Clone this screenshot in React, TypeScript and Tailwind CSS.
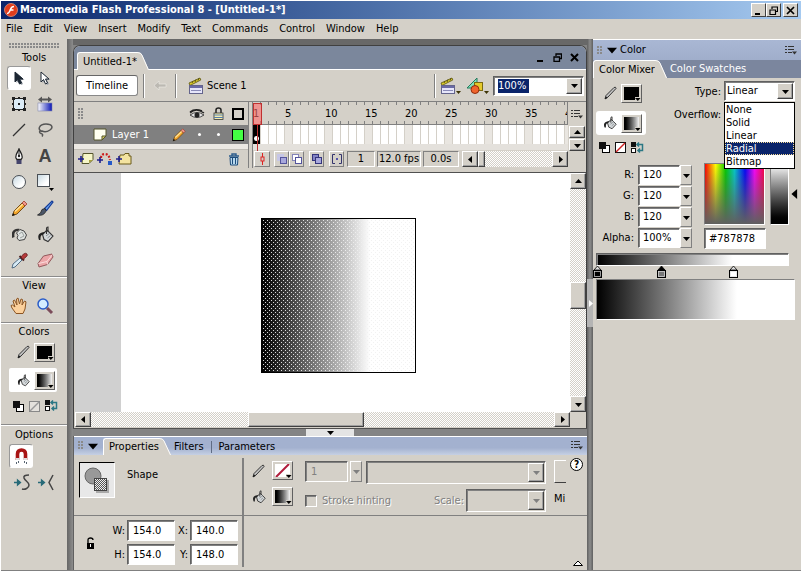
import type { ReactNode } from "react";

const raised =
  "flex items-center justify-center bg-[#d4d0c8] border border-t-white border-l-white border-r-[#404040] border-b-[#404040] shadow-[inset_-1px_-1px_0_#a0a0a0]";
const soft =
  "flex items-center justify-center bg-[#d4d0c8] border border-t-white border-l-white border-r-[#808080] border-b-[#808080]";
const sunken =
  "border border-t-[#606060] border-l-[#606060] border-r-white border-b-white shadow-[inset_1px_1px_0_#808080]";
const thin = "border border-t-[#808080] border-l-[#808080] border-r-white border-b-white";
const checker =
  "bg-[repeating-conic-gradient(#ffffff_0_25%,#d4d0c8_0_50%)] bg-[length:2px_2px]";
const grip =
  "bg-[radial-gradient(circle_at_1px_1px,#8a8a8a_1px,transparent_1px)] bg-[length:3px_3px]";
const fillRamp = "bg-[linear-gradient(90deg,#000000,#787878_34%,#ffffff_71%)]";

function Svg({ w, h, children, className = "" }: { w: number; h: number; children: ReactNode; className?: string }) {
  return (
    <svg width={w} height={h} viewBox={`0 0 ${w} ${h}`} className={`shrink-0 ${className}`} aria-hidden="true">
      {children}
    </svg>
  );
}

function Arrow({ dir, color = "#000", big = false }: { dir: "up" | "down" | "left" | "right"; color?: string; big?: boolean }) {
  const d = { down: "M0 2h7l-3.5 4z", up: "M0 5h7l-3.5 -4z", left: "M5 0v7l-4 -3.5z", right: "M2 0v7l4 -3.5z" }[dir];
  return (
    <svg width={big ? 10 : 7} height={big ? 10 : 7} viewBox="0 0 7 7" className="shrink-0" aria-hidden="true">
      <path d={d} fill={color} />
    </svg>
  );
}

/* ---------- icons ---------- */
const Pointer = ({ dark }: { dark: boolean }) => (
  <Svg w={12} h={15}>
    <path d="M2 1v10l2.500-2.500 2 4.500 2-1-2-4h3.500z" transform="translate(1.500 1)" fill="#9aa0a8" />
    <path d="M2 1v10l2.500-2.500 2 4.500 2-1-2-4h3.500z" fill={dark ? "#1c2733" : "#fff"} stroke="#1c2733" strokeWidth="1" />
  </Svg>
);
const Transform = () => (
  <Svg w={16} h={16}>
    <rect x="2.500" y="2.500" width="11" height="11" fill="#dcecf6" stroke="#222" />
    <path d="M1 1h3v3h-3zM12 1h3v3h-3zM1 12h3v3h-3zM12 12h3v3h-3zM7 7h2v2h-2zM7 1h2v2h-2zM7 13h2v2h-2zM1 7h2v2h-2zM13 7h2v2h-2z" fill="#222" />
  </Svg>
);
const FillTransform = () => (
  <Svg w={16} h={16}>
    <defs>
      <linearGradient id="ft"><stop stopColor="#fff" /><stop offset="1" stopColor="#0a14b4" /></linearGradient>
    </defs>
    <path d="M1 3.500l4-3v2h6v-2l4 3-4 3v-2H5v2z" fill="#555" />
    <rect x="1" y="7" width="14" height="8" fill="url(#ft)" stroke="#8088b0" strokeWidth=".6" />
  </Svg>
);
const Line = () => <Svg w={16} h={16}><path d="M2 14L14 2" stroke="#333" strokeWidth="1.300" /></Svg>;
const Lasso = () => (
  <Svg w={16} h={16}>
    <path d="M5 9.500C0 8 2 2 9 2c7 0 7 4 4 6s-6 2-8 1c-3-1-3 2-1 2.500s2 1.500 1 3" fill="none" stroke="#555" strokeWidth="1.500" />
  </Svg>
);
const Pen = () => (
  <Svg w={12} h={17}>
    <path d="M6 1C5 4 2 6.500 3 10l1 1.500h4L9 10c1-3.500-2-6-3-9z" fill="#fff" stroke="#222" strokeWidth="1.300" />
    <path d="M6 2v6" stroke="#222" /><circle cx="6" cy="8" r="1.200" fill="#222" />
    <rect x="3.500" y="12" width="5" height="4" fill="#44446c" />
  </Svg>
);
const Oval = () => (
  <Svg w={16} h={16}>
    <defs><linearGradient id="ov" x2="1" y2="1"><stop stopColor="#c4d6e0" /><stop offset=".7" stopColor="#fff" /></linearGradient></defs>
    <circle cx="8" cy="8" r="6.500" fill="url(#ov)" stroke="#4a4f55" />
  </Svg>
);
const Rect = () => (
  <Svg w={18} h={18}>
    <rect x="1.500" y="1.500" width="12" height="12" fill="url(#ov)" stroke="#4a4f55" />
    <path d="M13 15h5l-2.500 3z" fill="#000" />
  </Svg>
);
const Pencil = ({ s = 17 }: { s?: number }) => (
  <svg width={s} height={s} viewBox="0 0 17 17" aria-hidden="true">
    <path d="M1.500 15.500l1.500-4.500L11 3l3 3-8 8z" fill="#f3a52a" stroke="#6a4210" strokeWidth=".9" />
    <path d="M4 11.500l8-7.500" stroke="#ffe49a" strokeWidth="1.400" />
    <path d="M11 3l2-2 3 3-2 2z" fill="#f0988a" stroke="#9a3a2a" strokeWidth=".8" />
    <path d="M1 16l1-3 2 2z" fill="#111" />
  </svg>
);
const Brush = () => (
  <Svg w={17} h={17}>
    <path d="M7.500 8.500L15 1l1 1-6.500 8.500z" fill="#6ba6f0" stroke="#163c98" strokeWidth="1.200" />
    <path d="M8 8.500l-3 1-1.500 3.500-3 2c4 1 7.500-.5 8.500-4.500z" fill="#4b5668" stroke="#222" strokeWidth=".8" />
  </Svg>
);
const Ink = () => (
  <Svg w={17} h={15}>
    <path d="M1 11V5.500C2 2 6 1 9 2L7 4C4 4 3 6 3.500 10z" fill="#333" />
    <path d="M5.500 6L9 2.500l4 1.500 2.500 4-2 4.500-5.500 1-2-2.500 1-2.500z" fill="#e0e4e2" stroke="#444" />
    <path d="M8 7l3-2 2 4-4 2" fill="none" stroke="#9aa09e" />
  </Svg>
);
const Bucket = ({ s = 17 }: { s?: number }) => (
  <svg width={s} height={s} viewBox="0 0 17 17" className="shrink-0" aria-hidden="true">
    <path d="M5.500 8.500L10 4l6 6-5 5.500-4-2z" fill="#d4d8da" stroke="#333" strokeWidth="1.100" />
    <path d="M9 10l4-3M10.500 12l3-2.500" stroke="#8a9094" />
    <path d="M9.500 8V2.500q0-1.500 1.500-1.500V6" fill="none" stroke="#333" strokeWidth="1.100" />
    <path d="M2 14C0 9 2 6.500 8 6L6 8.500C3.500 9 3.500 11 3.500 14z" fill="#222" />
  </svg>
);
const Dropper = () => (
  <Svg w={17} h={17}>
    <path d="M1 16l1-4 7-6 2 2-7 7z" fill="#d6eaf5" stroke="#46617a" strokeWidth=".9" />
    <path d="M8.500 4l4.500 4.500" stroke="#4a2020" strokeWidth="2" />
    <path d="M10 5l2.500-3Q15 .5 16 2t-1 3l-3 2.500z" fill="#b63a3a" stroke="#622" strokeWidth=".8" />
  </Svg>
);
const Eraser = () => (
  <Svg w={17} h={15}>
    <path d="M1 10.500L6.500 3 15 1l1 3-5.500 7.500L2 14z" fill="#eba6a8" stroke="#8a4f52" strokeWidth=".9" />
    <path d="M1.500 10.500L10 8.500l5.500-7M10 8.500l.5 3" fill="none" stroke="#fbdcdc" />
  </Svg>
);
const Hand = () => (
  <Svg w={18} h={18}>
    <path d="M6 16.500L2 11 1 8.500l1.500-.5L5 10 3 4l1.500-1L7 8 6.500 2 8 1l1.500 6L11 2l1.500.5L12 8l2.500-4 1.500.8L15 12l-2 4.500z" fill="#fbd09c" stroke="#8b5524" />
  </Svg>
);
const Magnifier = () => (
  <Svg w={18} h={18}>
    <path d="M11 11l5 5" stroke="#7b4c5a" strokeWidth="3" />
    <circle cx="7" cy="7" r="5" fill="#d4ecff" stroke="#2a5cc8" strokeWidth="1.500" />
  </Svg>
);
const StrokePen = () => (
  <Svg w={13} h={14}>
    <path d="M1 13l1-3.500L10 1.500q2-1 2 1L4 11z" fill="#c4c4c4" stroke="#333" strokeWidth="1" />
    <path d="M1 13l1-2.500 1.500 1.500z" fill="#111" />
  </Svg>
);
const BlackWhite = () => (
  <Svg w={11} h={11}><rect x="3.500" y="3.500" width="7" height="7" fill="#fff" stroke="#000" /><rect width="7" height="7" fill="#111" /></Svg>
);
const NoColor = ({ c }: { c: string }) => (
  <Svg w={11} h={11}><rect x=".5" y=".5" width="10" height="10" fill={c === "#999" ? "#e4e1dc" : "#fff"} stroke={c === "#999" ? "#888" : "#111"} /><path d="M1 10L10 1" stroke={c} strokeWidth="1.500" /></Svg>
);
const Swap = () => (
  <Svg w={13} h={12}>
    <rect width="5" height="5" fill="#111" /><rect x=".5" y="6.500" width="4" height="4" fill="#fff" stroke="#111" />
    <path d="M6 2.500h5.500v6H7M8 .5L6 2.500l2 2M9 6.500l-2 2 2 2" fill="none" stroke="#2b7784" strokeWidth="1.500" />
  </Svg>
);
const Magnet = () => (
  <Svg w={13} h={17}>
    <path d="M2.500 12V6q0-4 4-4t4 4v6" fill="none" stroke="#a81414" strokeWidth="3.600" />
    <path d="M1 11h3.500M8.500 11H12" stroke="#ddd" strokeWidth="2" />
    <path d="M1 15h1M3 14h1M9 14h1M11 15h1" stroke="#234" strokeWidth="1.400" />
  </Svg>
);
const Smooth = ({ straight }: { straight?: boolean }) => (
  <Svg w={18} h={17}>
    <path d="M1 8.500h5M4.500 6l3 2.500-3 2.500z" fill="#276a78" stroke="#276a78" strokeWidth="1.300" />
    <path d={straight ? "M16 1l-4 7.500 4 7.500" : "M16 1q-6 0-5 3c1 3 5 4 5 7s-4 5-7 4"} fill="none" stroke="#444" strokeWidth="1.500" />
  </Svg>
);
const Clapper = ({ more }: { more?: boolean }) => (
  <Svg w={more ? 21 : 16} h={18}>
    <path d="M1 6L12 1l.8 2L2 8.500z" fill="#d7c92c" stroke="#5c5412" strokeWidth=".8" />
    <path d="M4 6l1-2M7 5l1-2.500M10 3.500l1-2.500" stroke="#5c5412" />
    <rect x="1.500" y="8.500" width="13" height="8" fill="#e6e6fa" stroke="#64648c" />
    <path d="M2 10h12" stroke="#6a6aa6" strokeWidth="2" /><path d="M3 13.500h10" stroke="#8a8ab8" />
    {more && <path d="M16 14h5l-2.500 3z" fill="#3d3406" />}
  </Svg>
);
const Symbols = () => (
  <Svg w={23} h={18}>
    <path d="M1 11L11 1v10z" fill="#7fe0ba" stroke="#257a5c" />
    <rect x="8.500" y="5.500" width="8" height="8" fill="#e4c92c" stroke="#7a6a10" />
    <circle cx="9" cy="12.500" r="4" fill="#f0642c" stroke="#8f2c0c" />
    <path d="M18 14h5l-2.500 3z" fill="#3d3406" />
  </Svg>
);
const PanelMenu = () => (
  <Svg w={12} h={10}>
    <path d="M0 1.500h2M0 4.500h2M0 7.500h2M3 1.500h6M3 4.500h6M3 7.500h4" stroke="#333" />
    <path d="M7 6.500h5l-2.500 3z" fill="#333" />
  </Svg>
);
const Eye = () => (
  <Svg w={16} h={12}>
    <path d="M1 5q6-6 14 0M1 4q5-4 12-1" fill="none" stroke="#222" strokeWidth="1.400" />
    <path d="M1 7q7 5 14 0-7-5-14 0z" fill="#e8e8e8" stroke="#444" /><circle cx="8" cy="7" r="2.500" fill="#222" />
  </Svg>
);
const Lock = () => (
  <Svg w={11} h={13}>
    <path d="M3 6V3q0-2 2.500-2T8 3v3" fill="none" stroke="#222" strokeWidth="1.500" />
    <rect x="1" y="6" width="9" height="6.500" fill="#f4ecb0" stroke="#333" strokeWidth=".8" /><path d="M1 8h9M1 10.500h9" stroke="#5580b0" />
  </Svg>
);
const Sheet = () => (
  <Svg w={14} h={13}><path d="M1 1h12v7l-4 4H1z" fill="#fffff0" stroke="#55552c" /><path d="M9 12V8h4z" fill="#d8cf60" stroke="#55552c" /></Svg>
);
const AddSheet = () => (
  <Svg w={16} h={14}><path d="M5 1.500h10v6l-4 4H4z" fill="#f6f6c8" stroke="#55552c" /><path d="M11 11V8h4z" fill="#a8a040" /><path d="M0 7h6M3 4v6" stroke="#20208c" strokeWidth="1.600" /></Svg>
);
const AddGuide = () => (
  <Svg w={16} h={14}><path d="M4 6q0-4 4-4t5 6" fill="none" stroke="#cc1c1c" strokeWidth="2.200" strokeDasharray="2 1.500" /><path d="M0 8h6M3 5v6" stroke="#20208c" strokeWidth="1.600" /><rect x="11" y="9" width="4" height="4" fill="#2458c8" /></Svg>
);
const AddFolder = () => (
  <Svg w={16} h={14}><path d="M4 3h4l1-1.500h4V4h2v8H3z" fill="#f3e3a0" stroke="#6b5a1a" /><path d="M0 7h6M3 4v6" stroke="#20208c" strokeWidth="1.600" /></Svg>
);
const Trash = () => (
  <Svg w={12} h={13}><path d="M1 3h10M4 3V1h4v2" stroke="#2c5c8c" fill="none" strokeWidth="1.400" /><path d="M2 4.500h8L9.500 12h-7z" fill="#b8d8ee" stroke="#1c4c7c" /><path d="M4.500 5v6M7.500 5v6" stroke="#1c4c7c" /></Svg>
);

/* ---------- controls ---------- */
function Swatch({ label, children }: { label: string; children: ReactNode }) {
  return (
    <button aria-label={label} className="relative flex h-[19px] w-[21px] items-center justify-center border border-t-white border-l-white border-r-[#606060] border-b-[#606060] bg-[#d4d0c8] p-[2px]">
      {children}
      <span className="absolute right-0 bottom-0"><Svg w={6} h={5}><rect width="6" height="5" fill="#d4d0c8" /><path d="M0 1h5.500l-2.700 3z" /></Svg></span>
    </button>
  );
}
const Black = () => <span className="h-full w-full bg-black" />;
const Ramp = () => <span className="h-full w-full bg-linear-to-r from-black to-[#f4f4f4]" />;
const NoStroke = () => (
  <span className="h-full w-full bg-white"><Svg w={15} h={13}><path d="M1 13L14 0" stroke="#b01c3c" strokeWidth="2" /></Svg></span>
);

function Tool({ name, on, children }: { name: string; on?: boolean; children: ReactNode }) {
  return (
    <button aria-label={name} className={`flex size-6 items-center justify-center rounded-[3px] ${on ? "border border-t-[#999] border-l-[#999] border-r-white border-b-white bg-white" : ""}`}>
      {children}
    </button>
  );
}

function Toolbar() {
  const rule = "border-t border-[#8b8b8b] shadow-[inset_0_1px_0_#ffffff]";
  return (
    <aside className="flex w-[66px] shrink-0 flex-col bg-[#d4d0c8]">
      <div className={`mx-2 mt-1 h-[5px] ${grip}`} />
      <section className="px-[6px] pb-1">
        <h2 className="pt-[2px] text-center leading-[16px]">Tools</h2>
        <div className="grid grid-cols-[24px_24px] gap-x-[2px] gap-y-[2px]">
          <Tool name="Selection" on><Pointer dark /></Tool>
          <Tool name="Subselection"><Pointer dark={false} /></Tool>
          <Tool name="Free transform"><Transform /></Tool>
          <Tool name="Fill transform"><FillTransform /></Tool>
          <Tool name="Line"><Line /></Tool>
          <Tool name="Lasso"><Lasso /></Tool>
          <Tool name="Pen"><Pen /></Tool>
          <Tool name="Text tool"><span className="font-['Liberation_Sans',sans-serif] text-[18px] font-bold text-[#444]">A</span></Tool>
          <Tool name="Oval"><Oval /></Tool>
          <Tool name="Rectangle"><Rect /></Tool>
          <Tool name="Pencil"><Pencil /></Tool>
          <Tool name="Brush"><Brush /></Tool>
          <Tool name="Ink bottle"><Ink /></Tool>
          <Tool name="Paint bucket"><Bucket /></Tool>
          <Tool name="Eyedropper"><Dropper /></Tool>
          <Tool name="Eraser"><Eraser /></Tool>
        </div>
      </section>
      <section className={`px-[6px] pb-1 ${rule}`}>
        <h2 className="pt-[1px] text-center leading-[16px]">View</h2>
        <div className="grid grid-cols-[24px_24px] gap-x-[2px]">
          <Tool name="Hand"><Hand /></Tool>
          <Tool name="Zoom"><Magnifier /></Tool>
        </div>
      </section>
      <section className={`px-2 pb-3 ${rule}`}>
        <h2 className="pt-[1px] text-center leading-[16px]">Colors</h2>
        <div className="flex h-6 items-center gap-1 pl-2"><StrokePen /><Swatch label="Stroke color"><Black /></Swatch></div>
        <div className="mt-1 flex h-6 w-12 items-center gap-1 rounded-[2px] bg-white pl-2"><Bucket s={13} /><Swatch label="Fill color"><Ramp /></Swatch></div>
        <div className="mt-2 flex items-center gap-[5px] pl-1"><BlackWhite /><NoColor c="#999" /><Swap /></div>
      </section>
      <section className={`px-2 ${rule}`}>
        <h2 className="pt-[1px] text-center leading-[18px]">Options</h2>
        <Tool name="Snap to objects" on><Magnet /></Tool>
        <div className="mt-[6px] flex gap-[6px] pl-1"><Smooth /><Smooth straight /></div>
      </section>
    </aside>
  );
}

function TabCorner({ h, fill = "#d4d0c8" }: { h: number; fill?: string }) {
  return (
    <svg width="12" height={h} viewBox="0 0 12 20" preserveAspectRatio="none" className="shrink-0" aria-hidden="true">
      <path d="M0 0q4 0 5 3l7 17H0z" fill={fill} /><path d="M0 .5q4 0 5 3l6.500 16.500" fill="none" stroke="#fff" />
    </svg>
  );
}

const frames = Array.from({ length: 42 }, (_, i) => i + 1);

function Timeline() {
  return (
    <div className="flex border-t border-[#808080]">
      <div className="flex w-[175px] shrink-0 flex-col border-r border-[#808080]">
        <div className="flex h-[23px] items-center pr-1">
          <span className={`ml-1 h-[12px] w-[6px] ${grip}`} />
          <span className="ml-auto flex items-center gap-2"><Eye /><Lock /><span className="size-3 border-2 border-black" /></span>
        </div>
        <div className="flex h-[19px] items-center bg-[#808080] pr-1 text-white">
          <span className="ml-[19px]"><Sheet /></span>
          <span className="ml-[5px]">Layer 1</span>
          <span className="ml-auto flex items-center"><Pencil s={14} /><span className="ml-3 size-[3px] rounded-full bg-white" /><span className="ml-4 size-[3px] rounded-full bg-white" /><span className="ml-3 size-3 border border-black bg-[#4f4]" /></span>
        </div>
        <div className="h-[6px] border-b border-[#c0bdb6] bg-[#ebe8e3]" />
        <div className="flex h-[18px] items-center gap-[3px] pr-2 pl-1"><AddSheet /><AddGuide /><AddFolder /><span className="ml-auto"><Trash /></span></div>
      </div>
      <div className="relative ml-[3px] min-w-0 flex-1 overflow-hidden border-l border-[#808080]">
        <div className="flex h-[23px] overflow-hidden border-r border-b border-[#808080]">
          {frames.map((f) => (
            <div key={f} className="flex w-2 shrink-0 flex-col justify-between">
              <span className="ml-auto h-[3px] w-px bg-[#808080]" />
              <span className="h-[13px] leading-[13px] whitespace-nowrap">{f === 1 || f % 5 === 0 ? f : ""}</span>
              <span className="ml-auto h-[3px] w-px bg-[#808080]" />
            </div>
          ))}
        </div>
        <div className="flex h-[19px] overflow-hidden bg-white">
          {frames.map((f) => (
            <div key={f} className={`w-2 shrink-0 border-r border-[#d4d0c8] ${f === 1 ? "flex items-end justify-center bg-black pb-[3px]" : f % 5 === 0 ? "bg-[#e9e6e1]" : "bg-white"}`}>
              {f === 1 && <span className="size-[5px] rounded-full bg-white" />}
            </div>
          ))}
        </div>
        <div className="h-[6px] bg-[#e4e1dc]" />
        <div className="flex h-[18px] items-center">
          <button aria-label="Center frame" className={`${soft} ml-px h-4 w-4`}><Svg w={5} h={12}><path d="M2.500 0v12" stroke="#d22" /><rect x="1" y="4" width="3" height="4" fill="#d4d0c8" stroke="#d22" /></Svg></button>
          <button aria-label="Onion skin" className={`${soft} ml-1 h-4 w-[15px]`}><Svg w={10} h={10}><rect width="7" height="7" fill="#c6c6e6" /><rect x="3.500" y="3.500" width="6" height="6" fill="#a8a8dc" stroke="#54549c" /></Svg></button>
          <button aria-label="Onion skin outlines" className={`${soft} h-4 w-[15px]`}><Svg w={10} h={10}><rect x=".5" y=".5" width="6" height="6" fill="#fff" stroke="#8484b8" /><rect x="3.500" y="3.500" width="6" height="6" fill="#fff" stroke="#54549c" /></Svg></button>
          <button aria-label="Edit multiple frames" className={`${soft} ml-[5px] h-4 w-[15px]`}><Svg w={10} h={10}><rect x=".5" y=".5" width="6" height="6" fill="#8484c4" stroke="#34347c" /><rect x="3.500" y="3.500" width="6" height="6" fill="#a8a8dc" stroke="#34347c" /></Svg></button>
          <button aria-label="Modify onion markers" className={`${soft} ml-[5px] h-4 w-[15px]`}><Svg w={10} h={10}><path d="M3 .5H.5v9H3M7 .5h2.500v9H7" fill="none" stroke="#34346c" /><rect x="4" y="4" width="2" height="2" fill="#55a" /></Svg></button>
          <span className={`${thin} ml-[3px] h-4 w-7 text-center leading-[14px]`}>1</span>
          <span className={`${thin} ml-[2px] flex h-4 w-11 justify-center leading-[14px] whitespace-nowrap`}>12.0 fps</span>
          <span className={`${thin} ml-[2px] h-4 w-9 text-center leading-[14px]`}>0.0s</span>
          <div className={`ml-[3px] flex h-4 min-w-0 flex-1 ${checker}`}>
            <button aria-label="Scroll left" className={`${raised} w-4`}><Arrow dir="left" /></button>
            <span className={`${raised} w-[7px]`} />
            <button aria-label="Scroll right" className={`${raised} ml-auto w-4`}><Arrow dir="right" /></button>
          </div>
        </div>
        <div className="absolute top-px left-0 h-[22px] w-[9px] border border-[#c03030] bg-[#ff6a6a]/60" />
        <div className="absolute top-[23px] left-1 h-[26px] w-px bg-[#c03030]" />
      </div>
      <div className="flex w-[18px] shrink-0 flex-col items-center">
        <button aria-label="Frame view" className="flex h-[23px] items-center"><PanelMenu /></button>
        <button aria-label="Scroll up" className={`${raised} mt-px h-3 w-4`}><Arrow dir="up" /></button>
        <button aria-label="Scroll down" className={`${raised} mt-px h-3 w-4`}><Arrow dir="down" /></button>
      </div>
    </div>
  );
}

/* A selected fill is covered with staggered light dots, fading out as the ramp reaches white. */
function SelectedShape() {
  return (
    <div className={`absolute top-[45px] left-[140px] size-[155px] border border-black ${fillRamp}`}>
      <svg className="h-full w-full" shapeRendering="crispEdges" aria-hidden="true">
        <defs>
          <pattern id="sel" width="4" height="4" patternUnits="userSpaceOnUse">
            <path d="M1 1h1v1H1zM3 3h1v1H3z" fill="#f0f0f0" />
          </pattern>
        </defs>
        <rect width="100%" height="100%" fill="url(#sel)" className="opacity-90" />
      </svg>
    </div>
  );
}

function DocumentWindow() {
  const bar = "mx-[5px] h-6 w-px bg-[#808080] shadow-[1px_0_0_#ffffff]";
  return (
    <section className="flex min-h-0 flex-1 flex-col overflow-hidden rounded-t-[7px] border border-b-0 border-[#404040] bg-[#d4d0c8]">
      <div className="flex h-6 shrink-0 items-end border-b border-white bg-[#7b879c] pl-[3px]">
        <div className="-mb-px flex h-[18px]">
          <span className="rounded-tl-[3px] border-t border-l border-white bg-[#d4d0c8] pl-[5px] leading-[17px]">Untitled-1*</span>
          <TabCorner h={18} />
        </div>
        <div className="ml-auto flex h-full items-center gap-2 pr-[7px]">
          <button aria-label="Minimize document"><Svg w={9} h={9}><path d="M1 8h6" stroke="#000" strokeWidth="2" /></Svg></button>
          <button aria-label="Restore document"><Svg w={9} h={9}><path d="M3 3V1h5.500v4.500H7M1 4h5.500v4.500H1z" fill="none" stroke="#000" strokeWidth="1.300" /></Svg></button>
          <button aria-label="Close document"><Svg w={9} h={9}><path d="M1 1l7 7M8 1L1 8" stroke="#000" strokeWidth="2" /></Svg></button>
        </div>
      </div>
      <div className="flex h-[31px] shrink-0 items-center pl-[2px]">
        <button className="h-[21px] w-[62px] rounded-[3px] border border-t-[#666] border-l-[#666] border-r-[#888] border-b-[#888] bg-white">Timeline</button>
        <span className={bar} />
        <button aria-label="Back" className="ml-1"><Svg w={14} h={11}><path d="M1 5.500L6 1v3h7v3H6v3z" fill="#bcb9b2" stroke="#eeece8" strokeWidth=".6" /></Svg></button>
        <span className={`${bar} ml-2`} />
        <span className="ml-[7px]"><Clapper /></span>
        <span className="ml-[3px]">Scene 1</span>
        <span className={`${bar} ml-auto`} />
        <button aria-label="Edit scene"><Clapper more /></button>
        <button aria-label="Edit symbols" className="ml-[5px]"><Symbols /></button>
        <div className={`${sunken} mr-[2px] ml-1 flex h-5 w-[91px] bg-white p-px`}>
          <label htmlFor="zoom" className="sr-only">Zoom</label>
          <div className="flex min-w-0 flex-1 items-center pl-[3px]">
            <input id="zoom" defaultValue="100%" className="h-[14px] w-[31px] bg-[#0a246a] text-white outline-none" />
          </div>
          <button aria-label="Zoom presets" className={`${raised} w-4`}><Arrow dir="down" /></button>
        </div>
      </div>
      <Timeline />
      <div className="mt-[4px] flex h-[240px] border-t border-[#505050] pl-px">
        <div className="flex min-w-0 flex-1 bg-white">
          <div className="w-[46px] shrink-0 bg-[#d0d0d0]" />
          <div className="relative min-w-0 flex-1 overflow-hidden">
            <SelectedShape />
          </div>
        </div>
        <div className={`flex w-4 flex-col ${checker}`}>
          <button aria-label="Scroll up" className={`${raised} h-4`}><Arrow dir="up" /></button>
          <span className="flex-1" />
          <span className={`${raised} h-[27px]`} />
          <span className="h-[87px]" />
          <button aria-label="Scroll down" className={`${raised} h-4`}><Arrow dir="down" /></button>
        </div>
      </div>
      <div className="flex h-[15px] shrink-0 pl-px">
        <div className={`flex flex-1 ${checker}`}>
          <button aria-label="Scroll left" className={`${raised} w-4`}><Arrow dir="left" /></button>
          <span className="w-[157px]" />
          <span className={`${raised} w-[116px]`} />
          <button aria-label="Scroll right" className={`${raised} ml-auto w-4`}><Arrow dir="right" /></button>
        </div>
        <span className="w-4" />
      </div>
    </section>
  );
}

function Field({ id, label, value, w }: { id: string; label: string; value: string; w: string }) {
  return (
    <>
      <label htmlFor={id} className="text-right">{label}</label>
      <input id={id} defaultValue={value} className={`${sunken} h-[21px] ${w} bg-white pl-[5px] outline-none`} />
    </>
  );
}

function Properties() {
  const dim = "text-[#808080] [text-shadow:1px_1px_0_#ffffff]";
  return (
    <section className="border-l border-[#606060] bg-[#d4d0c8]">
      <div className="flex h-[19px] items-end border-t border-white bg-linear-to-b from-[#a3b1cf] from-60% to-[#c6d0e4] pl-1">
        <span className={`mb-[5px] h-[9px] w-[6px] ${grip}`} />
        <button aria-label="Collapse properties" className="mb-1 ml-1"><Arrow dir="down" big /></button>
        <div className="ml-[5px] flex h-[17px]">
          <button className="rounded-tl-[3px] border-t border-l border-white bg-[#d4d0c8] pl-[5px] leading-[16px]">Properties</button>
          <TabCorner h={17} />
        </div>
        <button className="ml-[3px] h-[17px] leading-[17px]">Filters</button>
        <span className="mx-[7px] mb-[2px] h-3 w-px bg-[#606c84]" />
        <button className="h-[17px] leading-[17px]">Parameters</button>
        <button aria-label="Properties menu" className="mr-1 mb-[5px] ml-auto"><PanelMenu /></button>
      </div>
      <div className="flex h-[115px]">
        <div className="my-[3px] flex w-[170px] shrink-0 flex-col border-r-2 border-[#808080]">
          <div className="flex h-[57px] items-start pt-[4px] pl-[5px]">
            <div className="flex size-9 items-center justify-center border border-t-black border-l-black border-r-white border-b-white bg-[#e8e8e8]">
              <Svg w={26} h={26}>
                <defs><pattern id="dots" width="2" height="2" patternUnits="userSpaceOnUse"><rect width="2" height="2" fill="#eee" /><path d="M0 0h1v1H0zM1 1h1v1H1z" fill="#555" /></pattern></defs>
                <circle cx="9" cy="9" r="8" fill="#999" stroke="#666" /><rect x="12" y="13" width="13" height="13" fill="#aaa" /><rect x="10.500" y="11.500" width="12" height="12" fill="url(#dots)" stroke="#444" />
              </Svg>
            </div>
            <span className="mt-[6px] ml-3">Shape</span>
          </div>
          <div className="flex flex-1 items-center border-t border-[#808080] pt-[2px] pl-3">
            <Svg w={9} h={12}><path d="M2 6V3q0-2 2.500-2T7 3" fill="none" stroke="#000" strokeWidth="1.300" /><rect x="1" y="6" width="7" height="6" /><path d="M4.500 7v3" stroke="#fff" /></Svg>
            <div className="ml-auto grid grid-cols-[14px_48px_11px_48px] items-center gap-x-[2px] gap-y-[3px] pr-1">
              <Field id="pw" label="W:" value="154.0" w="w-[48px]" />
              <Field id="px" label="X:" value="140.0" w="w-[48px]" />
              <Field id="ph" label="H:" value="154.0" w="w-[48px]" />
              <Field id="py" label="Y:" value="148.0" w="w-[48px]" />
            </div>
          </div>
        </div>
        <div className="my-[3px] flex min-w-0 flex-1 flex-col">
          <div className="flex h-[57px] pl-2">
            <div className="grid grid-cols-[16px_21px] content-start items-center gap-x-1 gap-y-[7px] pt-[3px]">
              <StrokePen /><Swatch label="Stroke"><NoStroke /></Swatch>
              <Bucket s={14} /><Swatch label="Fill"><Ramp /></Swatch>
            </div>
            <div className="ml-3 flex min-w-0 flex-1 flex-col gap-[5px] pt-[3px]">
              <div className="flex h-[23px]">
                <label htmlFor="sw" className="sr-only">Stroke height</label>
                <input id="sw" disabled defaultValue="1" className={`${sunken} h-[21px] w-[43px] pl-[5px] text-[#808080]`} />
                <button disabled aria-label="Stroke height slider" className={`${soft} ml-[2px] h-[21px] w-3`}><Arrow dir="down" color="#808080" /></button>
                <div className={`${sunken} ml-1 flex min-w-0 flex-1 justify-end p-px`}>
                  <button disabled aria-label="Stroke style" className={`${raised} w-4`}><Arrow dir="down" color="#808080" /></button>
                </div>
              </div>
              <div className="flex h-[23px] items-center">
                <input id="hint" type="checkbox" disabled className={`${sunken} size-3 appearance-none`} />
                <label htmlFor="hint" className={`ml-[5px] whitespace-nowrap ${dim}`}>Stroke hinting</label>
                <label htmlFor="scale" className={`mr-[2px] ml-auto ${dim}`}>Scale:</label>
                <div className={`${sunken} flex h-[23px] w-[80px] p-px`}>
                  <select id="scale" disabled className="min-w-0 flex-1 appearance-none"><option></option></select>
                  <span className={`${raised} w-4`}><Arrow dir="down" color="#808080" /></span>
                </div>
              </div>
            </div>
            <div className="ml-2 w-3 pt-[2px]">
              <div className="h-[23px] border border-r-0 border-t-white border-l-white border-b-[#404040]" />
              <div className="mt-[9px]">Mi</div>
            </div>
            <button aria-label="Help" className="mx-[4px] flex size-[13px] items-center justify-center rounded-full border border-black bg-white text-[10px] leading-none font-bold">?</button>
          </div>
          <div className="flex flex-1 items-end justify-end border-t border-[#808080] pr-1 pb-px">
            <button aria-label="Collapse details"><Svg w={10} h={6}><path d="M.5 5.500h9L5 1z" fill="#fff" stroke="#000" /></Svg></button>
          </div>
        </div>
      </div>
    </section>
  );
}

function Channel({ id, label, value }: { id: string; label: string; value: string }) {
  return (
    <>
      <label htmlFor={id} className="text-right">{label}</label>
      <span className="flex h-5">
        <input id={id} defaultValue={value} className={`${sunken} w-[42px] bg-white pl-1 outline-none`} />
        <button aria-label={`${label} slider`} className={`${soft} w-3`}><Arrow dir="down" /></button>
      </span>
    </>
  );
}

function Stop({ fill, tip }: { fill: string; tip: string }) {
  return (
    <Svg w={9} h={13}><path d="M1 5l3.500-4L8 5z" fill={tip} stroke="#000" strokeWidth=".8" /><rect x=".5" y="5.500" width="8" height="7" fill={fill} stroke="#000" /><rect x="1.500" y="6.500" width="6" height="5" fill="none" stroke="#ddd" strokeWidth=".7" /></Svg>
  );
}

function ColorPanel() {
  return (
    <aside className="w-[208px] shrink-0 bg-[#d4d0c8]">
      <div className="flex h-[21px] items-center border-t border-white bg-linear-to-b from-[#a9b7d4] to-[#a0aecb] pl-1">
        <span className={`h-[9px] w-[5px] ${grip}`} />
        <button className="ml-[5px] flex items-center gap-[3px]"><Arrow dir="down" big />Color</button>
        <button aria-label="Color panel menu" className="mr-1 ml-auto"><PanelMenu /></button>
      </div>
      <div className="flex h-[18px] bg-[#7b869e]">
        <button className="rounded-tl-[3px] border-t border-l border-white bg-[#d4d0c8] pl-[5px] leading-[17px] whitespace-nowrap">Color Mixer</button>
        <TabCorner h={18} />
        <button className="ml-[3px] leading-[18px] text-white">Color Swatches</button>
      </div>
      <div className="pr-[6px] pl-[3px]">
        <div className="flex">
          <div className="w-[50px] pt-[3px]">
            <div className="flex h-[24px] items-center gap-1 pl-2"><StrokePen /><Swatch label="Mixer stroke"><Black /></Swatch></div>
            <div className="mt-[6px] flex h-6 items-center gap-1 rounded-[3px] bg-white pl-[7px]"><Bucket s={14} /><Swatch label="Mixer fill"><Ramp /></Swatch></div>
            <div className="mt-[7px] flex gap-[5px] pl-[3px]"><BlackWhite /><NoColor c="#c22" /><Swap /></div>
          </div>
          <div className="ml-auto grid grid-cols-[60px_71px] content-start gap-x-[3px] gap-y-[2px] pt-[3px] text-right">
            <label htmlFor="type" className="leading-[22px]">Type:</label>
            <div className="relative">
              <div className={`${sunken} flex h-5 bg-white p-px`}>
                <select id="type" defaultValue="Linear" className="min-w-0 flex-1 appearance-none pl-px outline-none">
                  <option>Linear</option>
                  <option>Radial</option>
                </select>
                <span className={`${raised} w-4`}><Arrow dir="down" /></span>
              </div>
              <ul role="listbox" aria-label="Fill types" className="absolute top-[21px] left-0 z-10 w-full border border-black bg-white text-left leading-[13px]">
                <li role="option" className="px-[1px]">None</li>
                <li role="option" className="px-[1px]">Solid</li>
                <li role="option" className="px-[1px]">Linear</li>
                <li role="option" aria-selected="true" className="bg-[#0a246a] px-[1px] text-white outline outline-dotted -outline-offset-1 outline-[#f5db95]">Radial</li>
                <li role="option" className="px-[1px]">Bitmap</li>
              </ul>
            </div>
            <span className="leading-[20px]">Overflow:</span>
          </div>
        </div>
        <div className="mt-[9px] flex">
          <div className="grid grid-cols-[38px_54px] content-start items-center gap-x-1 gap-y-px pt-[2px]">
            <Channel id="r" label="R:" value="120" />
            <Channel id="g" label="G:" value="120" />
            <Channel id="b" label="B:" value="120" />
            <Channel id="al" label="Alpha:" value="100%" />
          </div>
          <div className="ml-3">
            <div className="flex items-center">
              <div className={`${thin} h-[62px] w-[61px] bg-[linear-gradient(0deg,#606060,transparent),linear-gradient(90deg,#f00,#ff0_18%,#0c0_35%,#0cc_50%,#00f_68%,#f0f_84%,#f04)]`} />
              <div className={`${thin} ml-[5px] h-[62px] w-[19px] bg-linear-to-b from-white to-black`} />
              <span className="ml-[1px]"><Arrow dir="left" big /></span>
            </div>
            <label htmlFor="hex" className="sr-only">Hex color</label>
            <input id="hex" defaultValue="#787878" className={`${sunken} mt-[3px] block h-[21px] w-[62px] bg-white pl-1 outline-none`} />
          </div>
        </div>
        <div className="relative mt-[4px] pb-[13px]">
          <div className={`${sunken} mr-[6px] h-[13px] ${fillRamp}`} />
          <span className="absolute top-3 -left-[3px]"><Stop fill="#000" tip="#ddd" /></span>
          <span className="absolute top-3 left-[61px]"><Stop fill="#787878" tip="#000" /></span>
          <span className="absolute top-3 left-[133px]"><Stop fill="#fff" tip="#ddd" /></span>
        </div>
        <div className={`h-[41px] border border-t-[#808080] border-l-[#808080] border-r-white border-b-white ${fillRamp}`} />
      </div>
    </aside>
  );
}

const menus = ["File", "Edit", "View", "Insert", "Modify", "Text", "Commands", "Control", "Window", "Help"];

export default function App() {
  const sys = "flex h-[14px] w-[15px] items-center justify-center bg-[#d4d0c8] border border-t-white border-l-white border-r-[#404040] border-b-[#404040]";
  return (
    <div className="flex min-h-screen flex-col border border-white bg-[#d4d0c8] font-['DejaVu_Sans_Condensed','DejaVu_Sans',sans-serif] text-[11px] leading-[14px] text-black">
      <header className="flex h-[18px] items-center bg-linear-to-r from-[#0a246a] to-[#a6caf0] pr-[3px] pl-[3px] text-white">
        <Svg w={14} h={14}><circle cx="7" cy="7" r="6.500" fill="#e03c1c" stroke="#f6a080" strokeWidth=".7" /><path d="M10 3.500c-3 0-3 2-4 4s-1 3-3 3M5.500 7h4" fill="none" stroke="#fff" strokeWidth="1.500" /></Svg>
        <h1 className="ml-[2px] font-bold whitespace-nowrap">Macromedia Flash Professional 8 - [Untitled-1*]</h1>
        <div className="ml-auto flex">
          <button aria-label="Minimize" className={sys}><Svg w={9} h={9}><path d="M1 8h5" stroke="#000" strokeWidth="2" /></Svg></button>
          <button aria-label="Restore" className={sys}><Svg w={9} h={9}><path d="M3 3V1h5.500v4.500H7M1 4h5.500v4.500H1z" fill="none" stroke="#000" strokeWidth="1.200" /></Svg></button>
          <button aria-label="Close" className={`${sys} ml-[2px]`}><Svg w={9} h={9}><path d="M1 1l7 7M8 1L1 8" stroke="#000" strokeWidth="1.700" /></Svg></button>
        </div>
      </header>
      <nav className="flex h-5 items-center gap-[11px] pl-[5px]">
        {menus.map((m) => <button key={m}>{m}</button>)}
      </nav>
      <main className="flex flex-1 border-b border-[#808080]">
        <Toolbar />
        <div className="w-[6px] shrink-0 bg-linear-to-r from-[#666] to-[#8c8c8c]" />
        <div className="flex min-w-0 flex-1 flex-col bg-[#848484]">
          <div className="h-[6px] shrink-0 bg-[#686868]" />
          <DocumentWindow />
          <div className="flex h-2 shrink-0 justify-center border-t border-[#505050] bg-[#848484]">
            <button aria-label="Toggle properties" className="flex h-[7px] w-12 items-center justify-center bg-[#e4e4e4]"><Arrow dir="down" /></button>
          </div>
          <Properties />
        </div>
        <div className="flex w-[6px] shrink-0 flex-col bg-linear-to-r from-[#606060] via-[#8c8c8c] to-[#606060] pt-[240px]">
          <button aria-label="Toggle color panel" className="flex h-12 items-center justify-center bg-[#b4b4b4]"><Arrow dir="right" color="#fff" /></button>
        </div>
        <ColorPanel />
      </main>
    </div>
  );
}
